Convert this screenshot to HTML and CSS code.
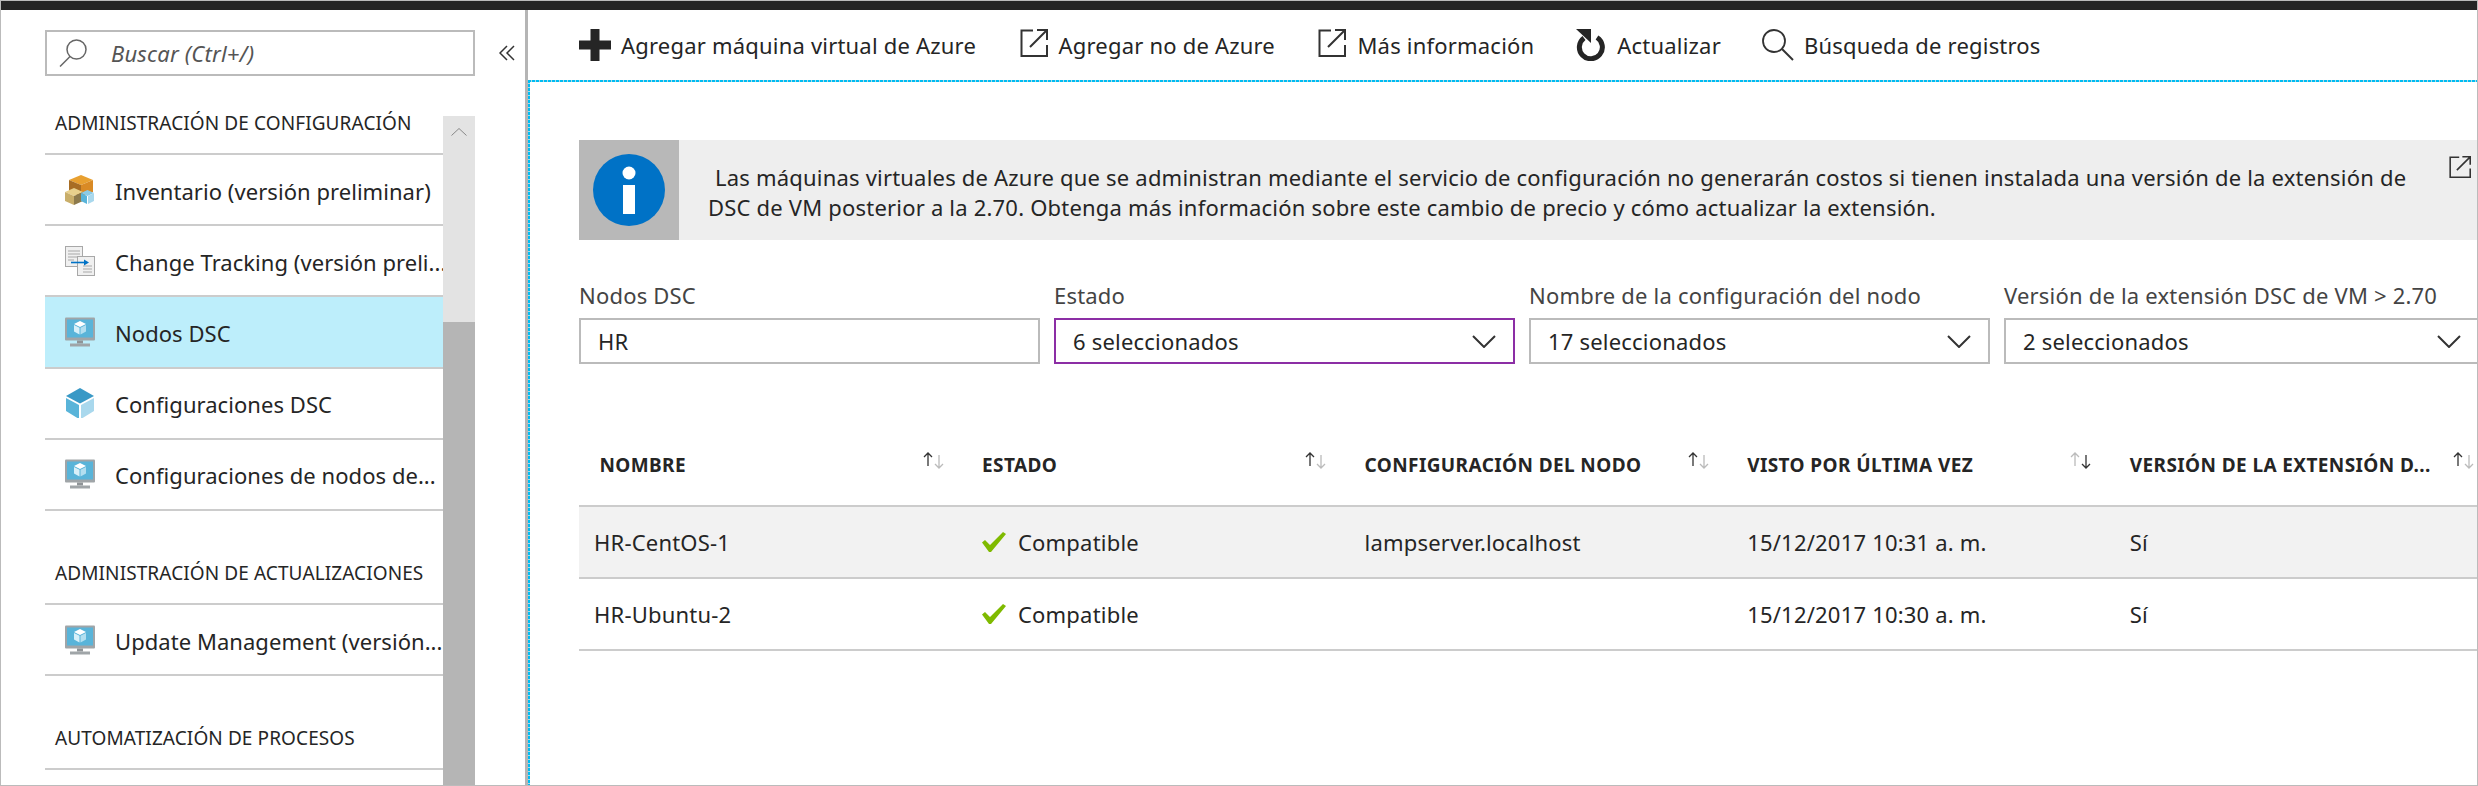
FILE: index.html
```html
<!DOCTYPE html>
<html lang="es">

<head>
    <meta charset="UTF-8">
    <title>Nodos DSC</title>
    <link rel="stylesheet" href="styles.css">
</head>

<body>
    <!-- Shared icons -->
    <svg class="icon-defs" xmlns="http://www.w3.org/2000/svg">
        <symbol id="ico-monitor" viewBox="0 0 30 29">
            <rect x="0" y="0" width="30" height="23" rx="1" fill="#a0a5a8"></rect>
            <rect x="2" y="2" width="26" height="18" fill="#59b4d9"></rect>
            <rect x="12" y="23" width="6" height="3" fill="#8f9497"></rect>
            <rect x="5" y="26" width="20" height="3" fill="#a0a5a8"></rect>
            <polygon points="15,3.5 21,6.5 15,9.5 9,6.5" fill="#fff"></polygon>
            <polygon points="9,7.5 14.5,10.3 14.5,17 9,14" fill="#d8f0f9"></polygon>
            <polygon points="21,7.5 15.5,10.3 15.5,17 21,14" fill="#b3dff0"></polygon>
        </symbol>
        <symbol id="ico-external" viewBox="0 0 28 28">
            <path d="M13 1.5H1.5V27H27V16" fill="none" stroke="#333" stroke-width="2"></path>
            <path d="M10 18L26 2M17 1H27V11" fill="none" stroke="#333" stroke-width="2"></path>
        </symbol>
        <symbol id="ico-chevron" viewBox="0 0 24 13">
            <path d="M1 1L12 12L23 1" fill="none" stroke="#333" stroke-width="2"></path>
        </symbol>
        <symbol id="ico-check" viewBox="0 0 24 20">
            <polygon points="0,10.5 3,8 8,13 21,0 24,2 9,20 7,20" fill="#7fba00"></polygon>
        </symbol>
        <symbol id="ico-sort-up" viewBox="0 0 23 17">
            <path d="M6 14V1M2 5L6 1L10 5" fill="none" stroke="#333" stroke-width="1.3"></path>
            <path d="M17 3V16M13 12L17 16L21 12" fill="none" stroke="#bbb" stroke-width="1.3"></path>
        </symbol>
        <symbol id="ico-sort-down" viewBox="0 0 23 17">
            <path d="M6 14V1M2 5L6 1L10 5" fill="none" stroke="#bbb" stroke-width="1.3"></path>
            <path d="M17 3V16M13 12L17 16L21 12" fill="none" stroke="#333" stroke-width="1.3"></path>
        </symbol>
    </svg>

    <div class="top-bar"></div>

    <div class="layout">
        <!-- Left menu -->
        <aside class="sidebar">
            <div class="search-row">
                <div class="search-box">
                    <svg class="search-icon" viewBox="0 0 28 28">
                        <circle cx="17.5" cy="10.5" r="9.5" fill="none" stroke="#666" stroke-width="1.5"></circle>
                        <path d="M11 17.500L1 27.500" fill="none" stroke="#666" stroke-width="1.5"></path>
                    </svg>
                    <input class="search-input" type="text" placeholder="Buscar (Ctrl+/)">
                </div>
                <svg class="collapse-icon" viewBox="0 0 16 16">
                    <path d="M8 1L1 8L8 15M15 1L8 8L15 15" fill="none" stroke="#333" stroke-width="1.5"></path>
                </svg>
            </div>

            <div class="nav-wrap">
                <nav class="nav-list">
                    <div class="nav-section">
                        <div class="nav-title">ADMINISTRACIÓN DE CONFIGURACIÓN</div>
                        <div class="nav-item">
                            <svg class="nav-icon" viewBox="0 0 30 30">
                                <polygon points="16,0 28,5 16,10 4,5" fill="#e8a030"></polygon>
                                <polygon points="4,5 16,10 16,22 4,17" fill="#a86d24"></polygon>
                                <polygon points="28,5 16,10 16,22 28,17" fill="#d98a25"></polygon>
                                <polygon points="9,13 18,17 9,21 0,17" fill="#e8d08c"></polygon>
                                <polygon points="0,17 9,21 9,30 0,26" fill="#c9ae6a"></polygon>
                                <polygon points="18,17 9,21 9,30 18,26" fill="#8d7a4c"></polygon>
                                <polygon points="22.500,15 29,18 22.500,21 16,18" fill="#8ccbe6"></polygon>
                                <polygon points="16,18 22,21 22,29 16,26" fill="#59b4d9"></polygon>
                                <polygon points="29,18 23,21 23,29 29,26" fill="#a9d8ed"></polygon>
                            </svg>
                            <span class="nav-text">Inventario (versión preliminar)</span>
                        </div>
                        <div class="nav-item">
                            <svg class="nav-icon" viewBox="0 0 30 30">
                                <rect x="0.500" y="0.500" width="17" height="20" fill="#f0f0f0" stroke="#a8a8a8"></rect>
                                <path d="M3 5H15M3 8H15M3 11H12M3 14H9" stroke="#a8a8a8" stroke-width="1.2"></path>
                                <rect x="12.500" y="10.500" width="17" height="19" fill="#f0f0f0" stroke="#a8a8a8"></rect>
                                <path d="M18 20H27M18 23H27M18 26H27" stroke="#a8a8a8" stroke-width="1.2"></path>
                                <path d="M6 16.500H20" stroke="#0072c6" stroke-width="1.6"></path>
                                <polygon points="19,13.500 24,16.500 19,19.500" fill="#0072c6"></polygon>
                            </svg>
                            <span class="nav-text">Change Tracking (versión preli...</span>
                        </div>
                        <div class="nav-item nav-item-active">
                            <svg class="nav-icon"><use href="#ico-monitor"></use></svg>
                            <span class="nav-text">Nodos DSC</span>
                        </div>
                        <div class="nav-item">
                            <svg class="nav-icon" viewBox="0 0 30 30">
                                <polygon points="15,0 29,8 15,15.500 1,8" fill="#3999c6"></polygon>
                                <polygon points="1,10 14,17 14,31 1,23" fill="#59b4d9"></polygon>
                                <polygon points="29,10 16,17 16,31 29,23" fill="#a9d8ed"></polygon>
                            </svg>
                            <span class="nav-text">Configuraciones DSC</span>
                        </div>
                        <div class="nav-item">
                            <svg class="nav-icon"><use href="#ico-monitor"></use></svg>
                            <span class="nav-text">Configuraciones de nodos de...</span>
                        </div>
                    </div>
                    <div class="nav-section">
                        <div class="nav-title">ADMINISTRACIÓN DE ACTUALIZACIONES</div>
                        <div class="nav-item">
                            <svg class="nav-icon"><use href="#ico-monitor"></use></svg>
                            <span class="nav-text">Update Management (versión...</span>
                        </div>
                    </div>
                    <div class="nav-section">
                        <div class="nav-title">AUTOMATIZACIÓN DE PROCESOS</div>
                    </div>
                </nav>
                <div class="scrollbar">
                    <div class="scroll-track">
                        <svg class="scroll-arrow" viewBox="0 0 16 8">
                            <path d="M0.500 7.500L8 0.500L15.500 7.500" fill="none" stroke="#888" stroke-width="1"></path>
                        </svg>
                    </div>
                    <div class="scroll-thumb"></div>
                </div>
            </div>
        </aside>

        <!-- Main area -->
        <main class="main">
            <div class="toolbar">
                <div class="tool tool-add">
                    <svg class="tool-icon tool-icon-plus" viewBox="0 0 32 32">
                        <path d="M11.500 0H20.500V11.500H32V20.500H20.500V32H11.500V20.500H0V11.500H11.500Z" fill="#252525"></path>
                    </svg>
                    Agregar máquina virtual de Azure
                </div>
                <div class="tool tool-azure">
                    <svg class="tool-icon tool-icon-ext"><use href="#ico-external"></use></svg>
                    Agregar no de Azure
                </div>
                <div class="tool tool-info">
                    <svg class="tool-icon tool-icon-ext"><use href="#ico-external"></use></svg>
                    Más información
                </div>
                <div class="tool tool-refresh">
                    <svg class="tool-icon tool-icon-plus" viewBox="0 0 32 32">
                        <path d="M22 8.500A11.500 11.500 0 1 1 9 9" fill="none" stroke="#252525" stroke-width="5"></path>
                        <polygon points="1,0 16,0 16,14" fill="#252525"></polygon>
                    </svg>
                    Actualizar
                </div>
                <div class="tool tool-logs">
                    <svg class="tool-icon tool-icon-plus" viewBox="0 0 32 32">
                        <circle cx="12" cy="12" r="11" fill="none" stroke="#333" stroke-width="1.800"></circle>
                        <path d="M20 20L31 31" fill="none" stroke="#333" stroke-width="2"></path>
                    </svg>
                    Búsqueda de registros
                </div>
            </div>

            <div class="content">
                <div class="banner">
                    <div class="banner-icon">
                        <svg class="info-icon" viewBox="0 0 72 72">
                            <circle cx="36" cy="36" r="36" fill="#0072c6"></circle>
                            <circle cx="36" cy="19" r="6.500" fill="#fff"></circle>
                            <rect x="30" y="31" width="12" height="29" fill="#fff"></rect>
                        </svg>
                    </div>
                    <div class="banner-text">
                        <span class="banner-first">Las máquinas virtuales de Azure que se administran mediante el servicio de configuración no generarán costos si tienen instalada una versión de la extensión de</span><br>
                        DSC de VM posterior a la 2.70. Obtenga más información sobre este cambio de precio y cómo actualizar la extensión.
                    </div>
                    <svg class="banner-link"><use href="#ico-external"></use></svg>
                </div>

                <div class="filters">
                    <div class="filter">
                        <label class="filter-label">Nodos DSC</label>
                        <input class="filter-input" type="text" value="HR">
                    </div>
                    <div class="filter">
                        <label class="filter-label">Estado</label>
                        <div class="filter-select filter-select-focus">
                            6 seleccionados
                            <svg class="chevron"><use href="#ico-chevron"></use></svg>
                        </div>
                    </div>
                    <div class="filter">
                        <label class="filter-label">Nombre de la configuración del nodo</label>
                        <div class="filter-select">
                            17 seleccionados
                            <svg class="chevron"><use href="#ico-chevron"></use></svg>
                        </div>
                    </div>
                    <div class="filter">
                        <label class="filter-label">Versión de la extensión DSC de VM &gt; 2.70</label>
                        <div class="filter-select">
                            2 seleccionados
                            <svg class="chevron"><use href="#ico-chevron"></use></svg>
                        </div>
                    </div>
                </div>

                <div class="grid">
                    <div class="grid-row grid-head">
                        <div class="head-cell"><span class="head-text">NOMBRE</span><svg class="sort"><use href="#ico-sort-up"></use></svg></div>
                        <div class="head-cell"><span class="head-text">ESTADO</span><svg class="sort"><use href="#ico-sort-up"></use></svg></div>
                        <div class="head-cell"><span class="head-text">CONFIGURACIÓN DEL NODO</span><svg class="sort"><use href="#ico-sort-up"></use></svg></div>
                        <div class="head-cell"><span class="head-text">VISTO POR ÚLTIMA VEZ</span><svg class="sort"><use href="#ico-sort-down"></use></svg></div>
                        <div class="head-cell"><span class="head-text">VERSIÓN DE LA EXTENSIÓN D...</span><svg class="sort"><use href="#ico-sort-up"></use></svg></div>
                    </div>
                    <div class="grid-row grid-row-hover">
                        <div class="cell cell-name">HR-CentOS-1</div>
                        <div class="cell"><svg class="check"><use href="#ico-check"></use></svg>Compatible</div>
                        <div class="cell">lampserver.localhost</div>
                        <div class="cell">15/12/2017 10:31 a. m.</div>
                        <div class="cell">Sí</div>
                    </div>
                    <div class="grid-row">
                        <div class="cell cell-name">HR-Ubuntu-2</div>
                        <div class="cell"><svg class="check"><use href="#ico-check"></use></svg>Compatible</div>
                        <div class="cell"></div>
                        <div class="cell">15/12/2017 10:30 a. m.</div>
                        <div class="cell">Sí</div>
                    </div>
                </div>
            </div>
        </main>
    </div>
</body>

</html>
```

FILE: styles.css
```css
* {
    box-sizing: border-box;
}

html,
body {
    margin: 0;
    padding: 0;
}

body {
    width: 2478px;
    height: 786px;
    overflow: hidden;
    background-color: white;
    color: #252525;
    font-family: "Noto Sans", sans-serif;
    font-size: 22px;
    letter-spacing: 0.2px;
    border: 1px solid #bbb;
    display: flex;
    flex-direction: column;
}

.icon-defs {
    display: none;
}

.top-bar {
    height: 9px;
    flex: none;
    background-color: #252525;
}

.layout {
    flex: 1;
    min-height: 0;
    display: flex;
}

/* Left menu */
.sidebar {
    width: 527px;
    flex: none;
    padding-left: 44px;
    border-right: 3px solid #b5b5b5;
    display: flex;
    flex-direction: column;
    overflow: hidden;
}

.search-row {
    height: 106px;
    flex: none;
    padding-top: 20px;
    display: flex;
    align-items: flex-start;
}

.search-box {
    width: 430px;
    height: 46px;
    border: 2px solid #bbb;
    display: flex;
    align-items: center;
    padding-left: 12px;
}

.search-icon {
    width: 28px;
    height: 28px;
    flex: none;
}

.search-input {
    border: none;
    outline: none;
    padding: 0;
    margin-left: 24px;
    width: 300px;
    font: italic 22px "Noto Sans", sans-serif;
    letter-spacing: 0.2px;
    background: none;
}

.search-input::placeholder {
    color: #555;
    opacity: 1;
}

.collapse-icon {
    width: 16px;
    height: 16px;
    margin: 15px 0 0 24px;
}

.nav-wrap {
    flex: 1;
    min-height: 0;
    display: flex;
    width: 430px;
}

.nav-list {
    width: 398px;
    flex: none;
}

.nav-section + .nav-section {
    margin-top: 55px;
}

.nav-title {
    height: 39px;
    padding-left: 10px;
    border-bottom: 2px solid #ccc;
    font-size: 19px;
    line-height: 14px;
    letter-spacing: 0.1px;
    white-space: nowrap;
}

.nav-item {
    height: 71.2px;
    display: flex;
    align-items: center;
    padding: 0 0 0 20px;
    border-bottom: 2px solid #ccc;
}

.nav-item-active {
    background-color: #bdeefb;
}

.nav-icon {
    width: 30px;
    height: 30px;
    flex: none;
    margin-right: 20px;
}

.nav-text {
    white-space: nowrap;
    padding-top: 2px;
    letter-spacing: 0.05px;
}

.scrollbar {
    width: 32px;
    flex: none;
    display: flex;
    flex-direction: column;
}

.scroll-track {
    height: 206px;
    flex: none;
    background-color: #e3e3e3;
    padding: 12px 8px 0;
}

.scroll-arrow {
    display: block;
    width: 16px;
    height: 8px;
}

.scroll-thumb {
    flex: 1;
    background-color: #b5b5b5;
}

/* Main area */
.main {
    flex: 1;
    min-width: 0;
    display: flex;
    flex-direction: column;
    overflow: hidden;
}

.toolbar {
    height: 70px;
    flex: none;
    padding-left: 51px;
    display: flex;
    align-items: center;
}

.tool {
    display: flex;
    align-items: center;
    white-space: nowrap;
}

.tool-icon {
    flex: none;
}

.tool-icon-plus {
    width: 32px;
    height: 32px;
    margin-right: 10px;
}

.tool-icon-ext {
    width: 28px;
    height: 28px;
    margin: -4px 11px 0 0;
}

.tool-azure,
.tool-info {
    margin-left: 43.5px;
}

.tool-refresh,
.tool-logs {
    margin-left: 41px;
}

.content {
    flex: 1;
    min-height: 0;
    padding: 60px 0 0 51px;
    overflow: hidden;
    background-image: repeating-linear-gradient(to right, #00bcf2 0 3px, #b8d8e0 3px 4px), repeating-linear-gradient(to bottom, #00bcf2 0 3px, #b8d8e0 3px 4px);
    background-size: 100% 2px, 2px 100%;
    background-repeat: no-repeat;
}

.banner {
    height: 100px;
    display: flex;
    background-color: #eee;
}

.banner-icon {
    width: 100px;
    flex: none;
    background-color: #b8b8b8;
    display: flex;
    align-items: center;
    justify-content: center;
}

.info-icon {
    width: 72px;
    height: 72px;
}

.banner-text {
    flex: 1;
    padding: 22px 0 0 29px;
    line-height: 30px;
    white-space: nowrap;
}

.banner-first {
    margin-left: 7px;
}

.banner-link {
    width: 22px;
    height: 22px;
    flex: none;
    margin: 16px 6px 0 0;
}

.filters {
    margin-top: 40px;
    display: grid;
    grid-template-columns: 461px 461px 461px 476px;
    column-gap: 14px;
}

.filter-label {
    display: block;
    height: 38px;
    line-height: 30px;
    color: #444;
    white-space: nowrap;
}

.filter-input,
.filter-select {
    width: 100%;
    height: 46px;
    border: 2px solid #bbb;
    padding: 0 17px;
    font: 22px "Noto Sans", sans-serif;
    letter-spacing: 0.2px;
    color: #252525;
    outline: none;
}

.filter-select {
    display: flex;
    align-items: center;
    justify-content: space-between;
}

.filter-select-focus {
    border-color: #8c2ea5;
}

.chevron {
    width: 24px;
    height: 13px;
    flex: none;
}

.grid {
    margin-top: 60px;
    width: 1913px;
}

.grid-row {
    display: grid;
    grid-template-columns: repeat(5, 382.6px);
    height: 72px;
    border-bottom: 2px solid #ccc;
}

.grid-head {
    height: 83px;
}

.grid-row-hover {
    background-color: #f2f2f2;
}

.head-cell {
    min-width: 0;
    display: flex;
    align-items: center;
    justify-content: space-between;
    padding: 0 17px 0 20.4px;
}

.head-text {
    font-size: 19px;
    font-weight: 700;
    letter-spacing: 0.4px;
    white-space: nowrap;
}

.sort {
    width: 23px;
    height: 17px;
    flex: none;
    margin-bottom: 8px;
}

.cell {
    display: flex;
    align-items: center;
    padding-left: 20.4px;
}

.cell-name {
    padding-left: 15px;
}

.check {
    width: 24px;
    height: 20px;
    flex: none;
    margin-right: 12px;
}
```
